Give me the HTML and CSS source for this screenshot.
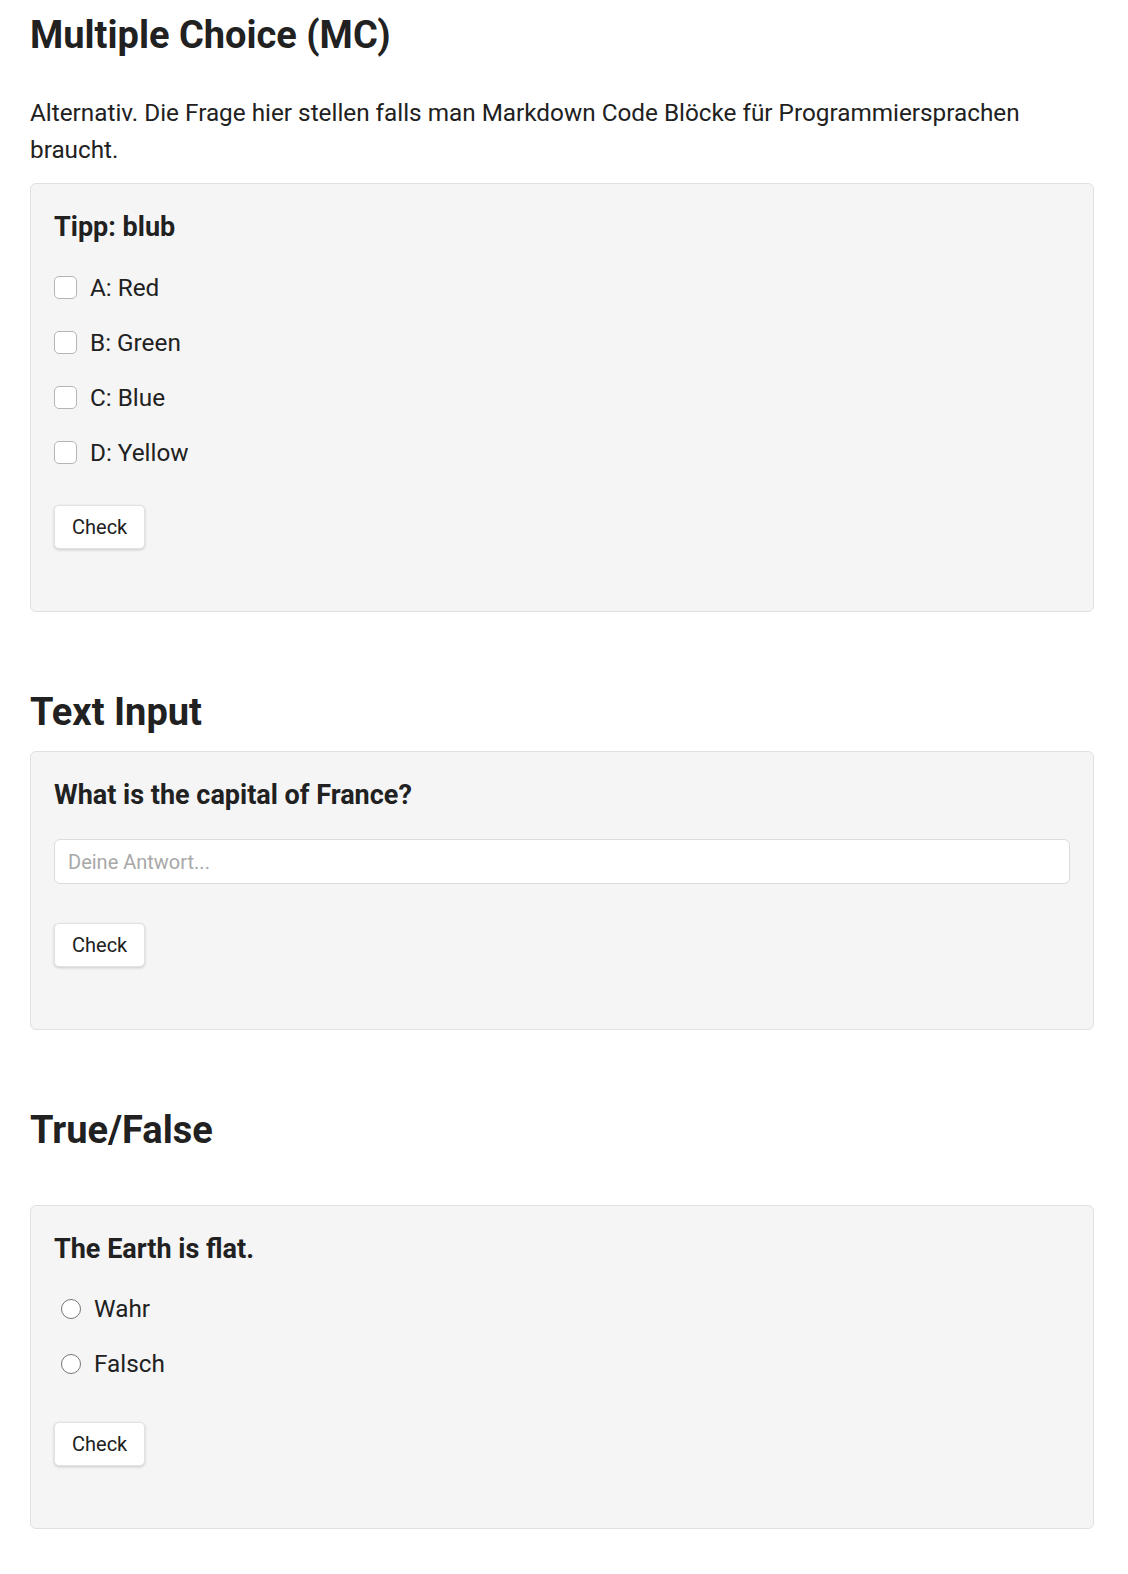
FILE: index.html
```html
<!DOCTYPE html>
<html lang="de">
<head>
<meta charset="utf-8">
<title>Quiz</title>
<link rel="stylesheet" href="styles.css">
</head>
<body>
<main class="page">
  <h2 class="section-title first">Multiple Choice (MC)</h2>
  <p class="intro">Alternativ. Die Frage hier stellen falls man Markdown Code Blöcke für Programmiersprachen braucht.</p>
  <div class="card">
    <h3 class="question">Tipp: blub</h3>
    <div class="options mc-options">
      <label class="option"><input type="checkbox" class="box"><span>A: Red</span></label>
      <label class="option"><input type="checkbox" class="box"><span>B: Green</span></label>
      <label class="option"><input type="checkbox" class="box"><span>C: Blue</span></label>
      <label class="option"><input type="checkbox" class="box"><span>D: Yellow</span></label>
    </div>
    <button class="check mc-check">Check</button>
  </div>

  <h2 class="section-title">Text Input</h2>
  <div class="card">
    <h3 class="question">What is the capital of France?</h3>
    <input type="text" class="answer" placeholder="Deine Antwort...">
    <button class="check text-check">Check</button>
  </div>

  <h2 class="section-title tf-title">True/False</h2>
  <div class="card">
    <h3 class="question">The Earth is flat.</h3>
    <div class="options tf-options">
      <label class="option"><input type="radio" name="tf" class="radio"><span>Wahr</span></label>
      <label class="option"><input type="radio" name="tf" class="radio"><span>Falsch</span></label>
    </div>
    <button class="check tf-check">Check</button>
  </div>
</main>
</body>
</html>
```
FILE: styles.css
```css
html, body {
  margin: 0;
  padding: 0;
  background: #ffffff;
}

body {
  font-family: Roboto, "Noto Sans", "Liberation Sans", sans-serif;
  color: #212121;
}

.page {
  padding: 0 34px 0 30px;
}

.section-title {
  font-size: 38px;
  line-height: 46px;
  font-weight: 700;
  margin: 77px 0 16px 0;
  color: #212121;
}

.section-title.first {
  margin-top: 12px;
  margin-bottom: 36px;
}

.section-title.tf-title {
  margin-bottom: 52px;
}

.intro {
  font-size: 24.3px;
  line-height: 37px;
  margin: 0 0 15px 0;
}

.card {
  background: #f5f5f5;
  border: 1px solid #e0e0e0;
  border-radius: 6px;
  padding: 26px 23px 62px 23px;
  display: flex;
  flex-direction: column;
  align-items: flex-start;
}

.question {
  font-size: 27px;
  line-height: 34px;
  font-weight: 700;
  margin: 0;
}

.options {
  display: flex;
  flex-direction: column;
  gap: 22px;
}

.mc-options {
  margin-top: 27px;
}

.tf-options {
  margin-top: 26px;
}

.option {
  display: flex;
  align-items: center;
  height: 33px;
  font-size: 24.3px;
  line-height: 33px;
}

.box {
  appearance: none;
  -webkit-appearance: none;
  width: 23px;
  height: 23px;
  margin: 0 13px 0 0;
  border: 1px solid #b5b5b5;
  border-radius: 5px;
  background: #ffffff;
  flex: none;
}

.radio {
  appearance: none;
  -webkit-appearance: none;
  width: 20px;
  height: 20px;
  margin: 0 13px 0 7px;
  border: 1.5px solid #767676;
  border-radius: 50%;
  background: #ffffff;
  flex: none;
  box-sizing: border-box;
}

.answer {
  box-sizing: border-box;
  width: 100%;
  height: 45px;
  margin: 27px 0 0 0;
  padding: 0 13px;
  border: 1px solid #dcdcdc;
  border-radius: 6px;
  background: #ffffff;
  font-family: Roboto, "Noto Sans", "Liberation Sans", sans-serif;
  font-size: 20px;
  color: #212121;
}

.answer::placeholder {
  color: #a8a8a8;
}

.check {
  box-sizing: border-box;
  height: 44px;
  padding: 0 17px;
  background: #ffffff;
  border: 1px solid #e2e2e2;
  border-radius: 5px;
  box-shadow: 0 1px 3px rgba(0, 0, 0, 0.18);
  font-family: Roboto, "Noto Sans", "Liberation Sans", sans-serif;
  font-size: 20px;
  color: #212121;
  cursor: pointer;
}

.mc-check {
  margin-top: 36px;
}

.text-check {
  margin-top: 39px;
}

.tf-check {
  margin-top: 42px;
}
```
